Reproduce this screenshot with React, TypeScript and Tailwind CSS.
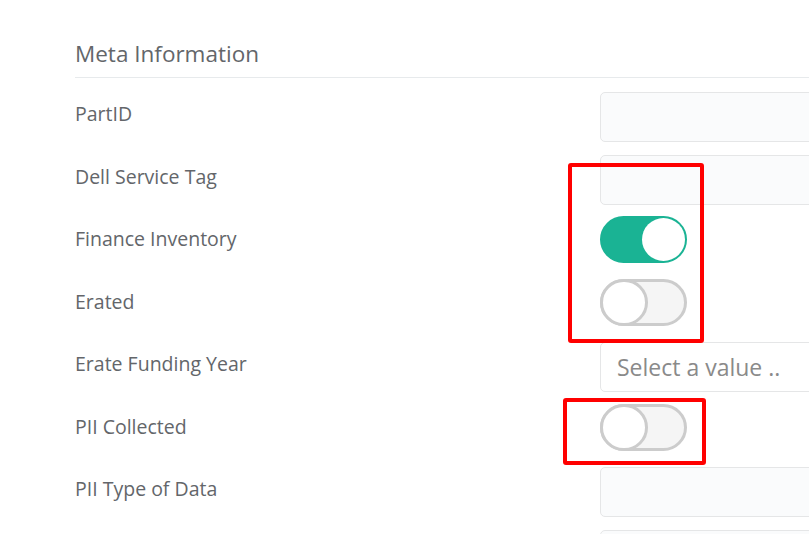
import React from 'react';

type Field =
  | { label: string; kind: 'input' }
  | { label: string; kind: 'select'; placeholder: string }
  | { label: string; kind: 'toggle'; on: boolean };

const fields: Field[] = [
  { label: 'PartID', kind: 'input' },
  { label: 'Dell Service Tag', kind: 'input' },
  { label: 'Finance Inventory', kind: 'toggle', on: true },
  { label: 'Erated', kind: 'toggle', on: false },
  { label: 'Erate Funding Year', kind: 'select', placeholder: 'Select a value ..' },
  { label: 'PII Collected', kind: 'toggle', on: false },
  { label: 'PII Type of Data', kind: 'input' },
  { label: '', kind: 'input' },
];

function Toggle({ on }: { on: boolean }) {
  if (on) {
    return (
      <div className="-mt-[1px] flex h-[47px] w-[87px] items-center justify-end rounded-full border-2 border-[#1ab394] bg-[#1ab394]">
        <div className="h-[43px] w-[43px] rounded-full bg-white" />
      </div>
    );
  }
  return (
    <div className="relative -mt-[1px] h-[47px] w-[87px] rounded-full border-[3px] border-[#cccccc] bg-[#f5f5f5]">
      <div className="absolute -left-[3px] -top-[3px] h-[47px] w-[48px] rounded-full border-[3px] border-[#cccccc] bg-white" />
    </div>
  );
}

export default function App() {
  return (
    <div
      className="relative h-[534px] w-[809px] overflow-hidden bg-white text-[#63666a]"
      style={{ fontFamily: '"Open Sans", "Liberation Sans", sans-serif' }}
    >
      <div className="pl-[75px] pt-[37px]">
        <h3 className="border-b border-[#e7eaec] pb-[6px] text-[22.5px] leading-[34px]">Meta Information</h3>

        <div className="pt-[14px]">
          {fields.map((f, i) => (
            <div key={i} className="flex h-[62.5px] items-start">
              <label className="w-[525px] shrink-0 pt-[4px] text-[19.5px] leading-[36px]">{f.label}</label>
              {f.kind === 'input' && (
                <div className="h-[50px] w-[300px] shrink-0 rounded-[5px] border border-[#e5e6e7] bg-[#fafbfc]" />
              )}
              {f.kind === 'select' && (
                <div className="flex h-[50px] w-[300px] shrink-0 items-center rounded-[5px] border border-[#e5e6e7] bg-white pl-[16px] text-[23px] text-[#8a8a8a]">
                  {f.placeholder}
                </div>
              )}
              {f.kind === 'toggle' && <Toggle on={f.on} />}
            </div>
          ))}
        </div>
      </div>

      {/* annotation boxes */}
      <div className="absolute left-[568px] top-[163px] h-[180px] w-[136px] rounded-[3px] border-4 border-[#ff0000]" />
      <div className="absolute left-[563px] top-[398px] h-[67px] w-[143px] rounded-[3px] border-4 border-[#ff0000]" />
    </div>
  );
}
